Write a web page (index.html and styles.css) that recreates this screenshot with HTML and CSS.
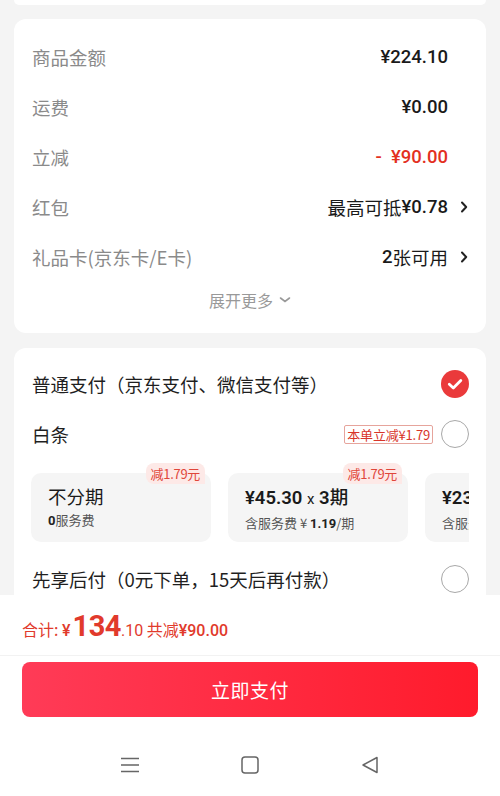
FILE: index.html
```html
<!DOCTYPE html>
<html lang="zh">
<head>
<meta charset="utf-8">
<link rel="stylesheet" href="styles.css">
</head>
<body>
<div class="page">
  <div class="scroll">
    <div class="card card-top"></div>

    <div class="card card-price">
      <div class="row"><span class="label">商品金额</span><span class="value num">¥224.10</span></div>
      <div class="row"><span class="label">运费</span><span class="value num">¥0.00</span></div>
      <div class="row"><span class="label">立减</span><span class="value num red">-&nbsp;&nbsp;¥90.00</span></div>
      <div class="row"><span class="label">红包</span><span class="value link">最高可抵<span class="num">¥0.78</span><svg class="chev" viewBox="0 0 8 12"><path d="M2 1.5 L6.2 6 L2 10.5"/></svg></span></div>
      <div class="row"><span class="label">礼品卡(京东卡/E卡)</span><span class="value link"><span class="num">2</span>张可用<svg class="chev" viewBox="0 0 8 12"><path d="M2 1.5 L6.2 6 L2 10.5"/></svg></span></div>
      <div class="more">展开更多<svg class="down" viewBox="0 0 12 8"><path d="M1.5 2 L6 5.5 L10.5 2"/></svg></div>
    </div>

    <div class="card card-pay">
      <div class="prow"><span class="ptitle">普通支付（京东支付、微信支付等）</span>
        <span class="check"><svg viewBox="0 0 28 28"><circle cx="14" cy="14" r="14" fill="#ea3a3b"/><path d="M8.3 14.3 L12.3 18 L19.8 10.6" fill="none" stroke="#fff" stroke-width="2.8" stroke-linecap="round" stroke-linejoin="round"/></svg></span>
      </div>
      <div class="prow"><span class="ptitle">白条</span>
        <span class="pright"><span class="tag">本单立减¥1.79</span><span class="radio"></span></span>
      </div>
      <div class="plans">
        <div class="plan">
          <span class="badge">减1.79元</span>
          <div class="ptop">不分期</div>
          <div class="psub"><b>0</b>服务费</div>
        </div>
        <div class="plan">
          <span class="badge">减1.79元</span>
          <div class="ptop num strong">¥45.30 <span class="x">x</span> 3<span class="cjk">期</span></div>
          <div class="psub">含服务费 ¥ <b>1.19</b>/期</div>
        </div>
        <div class="plan">
          <div class="ptop num strong">¥23.21 <span class="x">x</span> 6<span class="cjk">期</span></div>
          <div class="psub">含服务费 ¥ <b>0.60</b>/期</div>
        </div>
      </div>
      <div class="prow"><span class="ptitle">先享后付（0元下单，15天后再付款）</span><span class="radio"></span></div>
    </div>
  </div>

  <div class="footer">
    <div class="total">合计:&nbsp;<span class="num strong">¥</span><span class="big num">134</span><span class="num">.10</span>&nbsp;共减<span class="num strong">¥90.00</span></div>
    <div class="btnwrap"><div class="paybtn">立即支付</div></div>
    <div class="nav">
      <svg class="navicon" viewBox="0 0 24 24"><path d="M3 5.5 H21 M3 12 H21 M3 18.5 H21"/></svg>
      <svg class="navicon" viewBox="0 0 24 24"><rect x="4" y="4" width="16" height="16" rx="3"/></svg>
      <svg class="navicon" viewBox="0 0 24 24"><path d="M19 4.5 V19.5 L5 12 Z"/></svg>
    </div>
  </div>
</div>
</body>
</html>
```

FILE: styles.css
```css
* { box-sizing: border-box; }
html, body { margin: 0; padding: 0; }
body {
  width: 500px;
  height: 796px;
  overflow: hidden;
  background: #f4f4f4;
  font-family: "Noto Sans CJK SC", "Noto Sans", sans-serif;
  color: #1a1a1a;
}
.page {
  display: flex;
  flex-direction: column;
  height: 796px;
}
.scroll {
  height: 595px;
  overflow: hidden;
  flex: none;
}
.card {
  background: #fff;
  margin: 0 14px;
  border-radius: 12px;
}
.card-top {
  height: 5px;
  border-radius: 0 0 12px 12px;
}
.card-price {
  margin-top: 14px;
  padding: 13px 38px 13px 18px;
}
.num {
  font-family: "Roboto", "Noto Sans CJK SC", sans-serif;
}
.row {
  height: 50px;
  display: flex;
  align-items: center;
  justify-content: space-between;
}
.label {
  font-size: 18.5px;
  color: #8a8a8a;
}
.value {
  font-size: 18.5px;
  font-weight: 400;
  color: #1a1a1a;
  display: flex;
  align-items: center;
}
.value.num { font-weight: 500; }
.value .num { font-weight: 500; }
.red { color: #e3301f; }
.link { margin-right: -20px; }
.chev {
  width: 8px;
  height: 12px;
  margin-left: 12px;
  fill: none;
  stroke: #222;
  stroke-width: 2;
  stroke-linecap: round;
  stroke-linejoin: round;
}
.more {
  height: 38px;
  display: flex;
  align-items: center;
  justify-content: center;
  font-size: 16px;
  color: #999;
  margin-right: -20px;
  padding-bottom: 2px;
}
.down {
  width: 12px;
  height: 8px;
  margin-left: 6px;
  fill: none;
  stroke: #999;
  stroke-width: 1.6;
  stroke-linecap: round;
}
.card-pay {
  margin-top: 15px;
  padding: 11px 17px 0 17px;
  height: 400px;
}
.prow {
  height: 50px;
  display: flex;
  align-items: center;
  justify-content: space-between;
  padding-left: 1px;
}
.ptitle {
  font-size: 18.5px;
  color: #1f1f1f;
}
.pright {
  display: flex;
  align-items: center;
  gap: 8px;
}
.check svg { width: 28px; height: 28px; display: block; }
.radio {
  width: 28px;
  height: 28px;
  border-radius: 50%;
  border: 1.5px solid #a8a8a8;
  display: block;
}
.tag {
  font-size: 13px;
  line-height: 17px;
  color: #d8352a;
  border: 1px solid #e6a49c;
  border-radius: 2px;
  padding: 0 2px;
  letter-spacing: -0.2px;
}
.plans {
  display: flex;
  gap: 17px;
  overflow: hidden;
  padding-top: 14px;
  margin-bottom: 12px;
}
.plan {
  position: relative;
  flex: none;
  width: 180px;
  height: 69px;
  background: #f5f5f5;
  border-radius: 10px;
  padding: 9px 0 0 17px;
}
.badge {
  position: absolute;
  top: -10px;
  right: 6px;
  height: 21px;
  line-height: 21px;
  padding: 0 5px;
  font-size: 13px;
  color: #e0463a;
  background: #fde9e7;
  border-radius: 8px 8px 0 8px;
  letter-spacing: -0.3px;
}
.ptop {
  font-size: 18.5px;
  line-height: 28px;
  color: #1a1a1a;
  white-space: nowrap;
}
.ptop.strong { font-weight: 600; }
.ptop .x { font-weight: 400; font-size: 15px; }
.ptop .cjk { font-family: "Noto Sans CJK SC", sans-serif; font-weight: 500; }
.psub {
  font-size: 13px;
  line-height: 20px;
  color: #555;
  white-space: nowrap;
}
.psub b {
  font-family: "Roboto", sans-serif;
  font-weight: 700;
  color: #222;
}
.footer {
  flex: 1;
  background: #fff;
  display: flex;
  flex-direction: column;
}
.total {
  height: 61px;
  border-bottom: 1px solid #f2f2f2;
  display: flex;
  align-items: baseline;
  padding: 14px 0 0 22px;
  font-size: 16px;
  color: #e13a2c;
}
.total .strong { font-weight: 500; }
.total .big {
  font-size: 29px;
  font-weight: 700;
  letter-spacing: -0.5px;
  margin-left: 2px;
}
.btnwrap {
  padding: 6px 22px 0 22px;
}
.paybtn {
  height: 55px;
  border-radius: 8px;
  background: linear-gradient(90deg, #ff3b57 0%, #ff1b2c 100%);
  color: #fff;
  font-size: 19px;
  display: flex;
  align-items: center;
  justify-content: center;
  letter-spacing: 0.5px;
}
.nav {
  display: flex;
  justify-content: center;
  gap: 96px;
  padding-top: 36px;
}
.navicon {
  width: 24px;
  height: 24px;
  fill: none;
  stroke: #666;
  stroke-width: 1.5;
  stroke-linejoin: round;
}
```
